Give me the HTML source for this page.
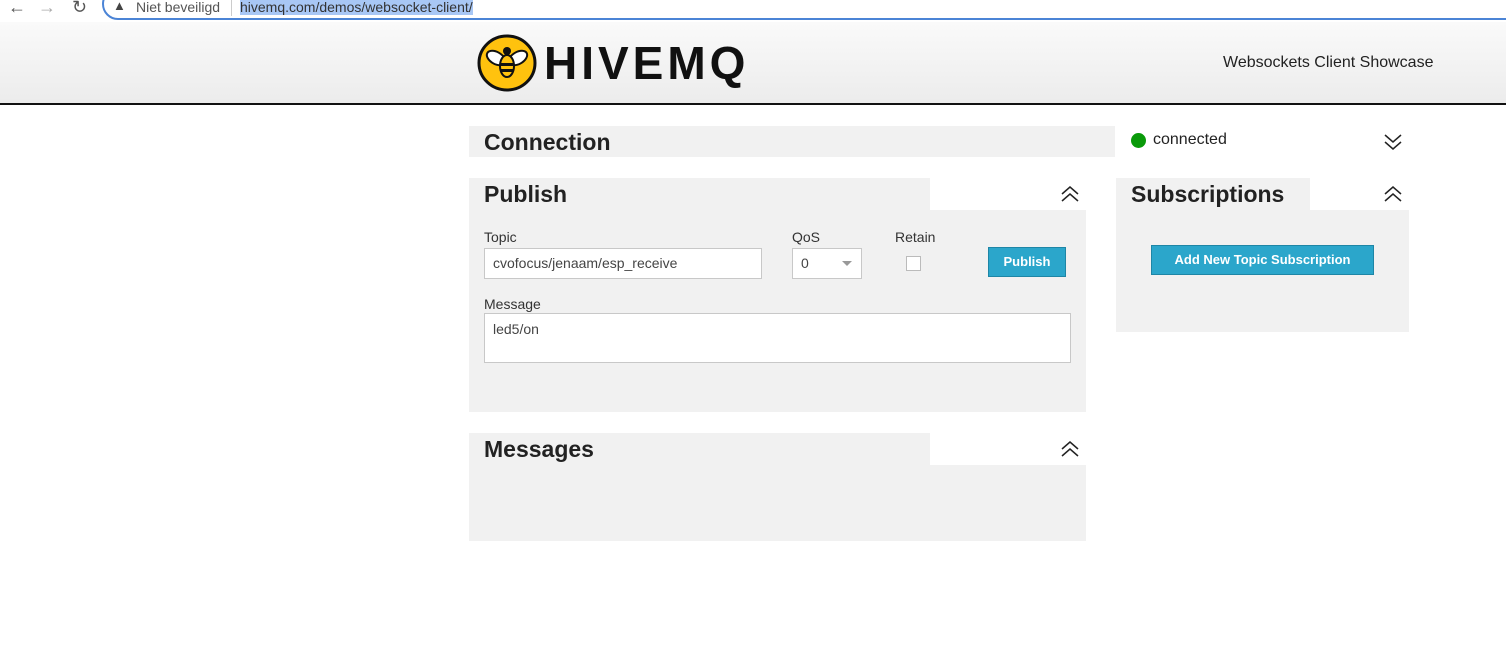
<!DOCTYPE html>
<html><head><style>
*{box-sizing:border-box}
body{margin:0;width:1506px;height:655px;position:relative;background:#fff;font-family:"Liberation Sans",sans-serif;overflow:hidden}
.a{position:absolute}
.bar{background:#f1f1f1}
h2{margin:0;font-size:23px;font-weight:bold;color:#222;position:absolute}
.lbl{font-size:14px;color:#333;position:absolute}
.in{position:absolute;background:#fff;border:1px solid #c8c8c8;font-size:14px;color:#444;padding:8px}
.btn{position:absolute;background:#2ba6cb;border:1px solid #1e86a6;color:#fff;font-weight:bold;font-size:13px;text-align:center}
.chev{position:absolute;width:22px;height:22px}
</style></head><body>
<div class="a" style="left:0;top:0;width:1506px;height:22px;background:#fff"></div>
<div class="a" style="left:8px;top:-3px;font-size:18px;color:#555">←</div>
<div class="a" style="left:38px;top:-3px;font-size:18px;color:#aaa">→</div>
<div class="a" style="left:72px;top:-3px;font-size:18px;color:#555">↻</div>
<div class="a" style="left:102px;top:-12px;width:1420px;height:32px;border:2px solid #4b84d6;border-radius:16px"></div>
<div class="a" style="left:113px;top:-2px;font-size:13px;color:#444">▲</div>
<div class="a" style="left:136px;top:-1px;font-size:14px;color:#555">Niet beveiligd</div>
<div class="a" style="left:231px;top:0;width:1px;height:16px;background:#ccc"></div>
<div class="a" style="left:240px;top:-1px;font-size:14px;color:#333;background:#a8c7f5">hivemq.com/demos/websocket-client/</div>
<div class="a" style="left:0;top:22px;width:1506px;height:81px;background:linear-gradient(#fafafa,#ececec)"></div>
<div class="a" style="left:0;top:103px;width:1506px;height:2px;background:#111"></div>
<svg class="a" style="left:477px;top:34px" width="60" height="58" viewBox="0 0 60 58"><ellipse cx="30" cy="29" rx="28" ry="27" fill="#ffc20e" stroke="#111" stroke-width="3"/><ellipse cx="19" cy="24" rx="10" ry="6" fill="#fff" stroke="#111" stroke-width="2" transform="rotate(30 19 24)"/><ellipse cx="41" cy="24" rx="10" ry="6" fill="#fff" stroke="#111" stroke-width="2" transform="rotate(-30 41 24)"/><ellipse cx="30" cy="32" rx="7" ry="11" fill="#ffc20e" stroke="#111" stroke-width="2"/><rect x="23" y="29" width="14" height="3" fill="#111"/><rect x="24" y="35" width="12" height="3" fill="#111"/><circle cx="30" cy="17" r="4" fill="#111"/></svg>
<div class="a" style="left:544px;top:36px;font-size:46px;font-weight:bold;color:#111;letter-spacing:4px">HIVEMQ</div>
<div class="a" style="left:1223px;top:54px;font-size:16px;color:#222">Websockets Client Showcase</div>

<div class="a bar" style="left:469px;top:126px;width:646px;height:31px"></div>
<h2 style="left:484px;top:129px">Connection</h2>
<div class="a" style="left:1131px;top:133px;width:15px;height:15px;border-radius:50%;background:#0a9a0a"></div>
<div class="a" style="left:1153px;top:131px;font-size:16px;color:#222">connected</div>
<svg class="chev" style="left:1382px;top:131px" viewBox="0 0 22 22"><path d="M3 4l8 7 8-7M3 11l8 7 8-7" fill="none" stroke="#222" stroke-width="1.5"/></svg>

<div class="a bar" style="left:469px;top:178px;width:461px;height:33px"></div>
<div class="a bar" style="left:469px;top:210px;width:617px;height:202px"></div>
<h2 style="left:484px;top:181px">Publish</h2>
<svg class="chev" style="left:1059px;top:183px" viewBox="0 0 22 22"><path d="M3 11l8-7 8 7M3 18l8-7 8 7" fill="none" stroke="#222" stroke-width="1.5"/></svg>
<div class="lbl" style="left:484px;top:229px">Topic</div>
<div class="in" style="left:484px;top:248px;width:278px;height:31px;padding:6px 8px">cvofocus/jenaam/esp_receive</div>
<div class="lbl" style="left:792px;top:229px">QoS</div>
<div class="in" style="left:792px;top:248px;width:70px;height:31px;padding:6px 8px">0<span style="position:absolute;right:9px;top:12px;border:5px solid transparent;border-top-color:#999"></span></div>
<div class="lbl" style="left:895px;top:229px">Retain</div>
<div class="a" style="left:906px;top:256px;width:15px;height:15px;border:1px solid #bbb;background:#fff"></div>
<div class="btn" style="left:988px;top:247px;width:78px;height:30px;line-height:28px">Publish</div>
<div class="lbl" style="left:484px;top:296px">Message</div>
<div class="in" style="left:484px;top:313px;width:587px;height:50px;padding:7px 8px">led5/on</div>

<div class="a bar" style="left:469px;top:433px;width:461px;height:33px"></div>
<div class="a bar" style="left:469px;top:465px;width:617px;height:76px"></div>
<h2 style="left:484px;top:436px">Messages</h2>
<svg class="chev" style="left:1059px;top:438px" viewBox="0 0 22 22"><path d="M3 11l8-7 8 7M3 18l8-7 8 7" fill="none" stroke="#222" stroke-width="1.5"/></svg>

<div class="a bar" style="left:1116px;top:178px;width:194px;height:33px"></div>
<div class="a bar" style="left:1116px;top:210px;width:293px;height:122px"></div>
<h2 style="left:1131px;top:181px">Subscriptions</h2>
<svg class="chev" style="left:1382px;top:183px" viewBox="0 0 22 22"><path d="M3 11l8-7 8 7M3 18l8-7 8 7" fill="none" stroke="#222" stroke-width="1.5"/></svg>
<div class="btn" style="left:1151px;top:245px;width:223px;height:30px;line-height:28px">Add New Topic Subscription</div>
</body></html>
